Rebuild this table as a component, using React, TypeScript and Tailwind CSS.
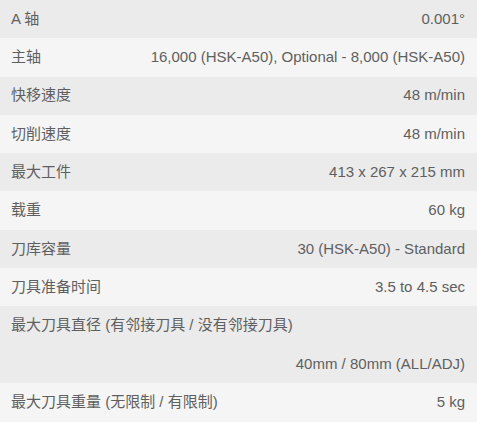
const specs: Array<{ label: string; value: string; wrap?: boolean }> = [
  { label: 'A 轴', value: '0.001°' },
  { label: '主轴', value: '16,000 (HSK-A50), Optional - 8,000 (HSK-A50)' },
  { label: '快移速度', value: '48 m/min' },
  { label: '切削速度', value: '48 m/min' },
  { label: '最大工件', value: '413 x 267 x 215 mm' },
  { label: '载重', value: '60 kg' },
  { label: '刀库容量', value: '30 (HSK-A50) - Standard' },
  { label: '刀具准备时间', value: '3.5 to 4.5 sec' },
  { label: '最大刀具直径 (有邻接刀具 / 没有邻接刀具)', value: '40mm / 80mm (ALL/ADJ)', wrap: true },
  { label: '最大刀具重量 (无限制 / 有限制)', value: '5 kg' },
];

export default function App() {
  return (
    <div
      className="w-[477px] h-[422px] overflow-hidden bg-[#f5f5f5] text-[15px] text-[#5f5f5f]"
      style={{ fontFamily: '"Liberation Sans", "Noto Sans CJK SC", sans-serif' }}
    >
      {specs.map((row, i) => (
        <div
          key={i}
          className={`pl-[11px] pr-[12px] ${i % 2 === 0 ? 'bg-[#ebebeb]' : 'bg-[#f5f5f5]'} ${
            row.wrap ? 'flex flex-col' : 'flex items-center justify-between h-[38.3px]'
          }`}
        >
          {row.wrap ? (
            <>
              <div className="h-[38.3px] flex items-center">{row.label}</div>
              <div className="h-[38.3px] flex items-center justify-end">{row.value}</div>
            </>
          ) : (
            <>
              <span>{row.label}</span>
              <span>{row.value}</span>
            </>
          )}
        </div>
      ))}
    </div>
  );
}
